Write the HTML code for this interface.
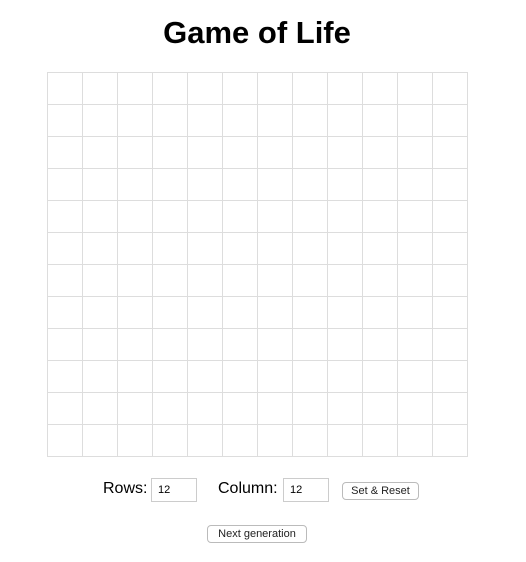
<!DOCTYPE html>
<html><head><style>
body{margin:0;width:526px;height:562px;background:#fff;font-family:"Liberation Sans",sans-serif;position:relative;overflow:hidden}
h1{position:absolute;top:15px;left:0;width:514px;text-align:center;margin:0;font-size:31px;font-weight:bold;color:#000}
.grid{position:absolute;left:47px;top:72px;width:420px;height:384px;
background-image:linear-gradient(to right,#ddd 1px,transparent 1px),linear-gradient(to bottom,#ddd 1px,transparent 1px);
background-size:35px 32px;border-right:1px solid #ddd;border-bottom:1px solid #ddd;box-sizing:content-box}
.t{position:absolute;font-size:16px;color:#000}
.in{position:absolute;border:1px solid #ccc;font-size:11px;line-height:22px;padding-left:6px;box-sizing:border-box;width:46px;height:24px}
.btn{position:absolute;border:1px solid #bbb;border-radius:4px;font-size:11px;text-align:center;color:#222;background:#fff;box-sizing:border-box;line-height:16px}
</style></head><body>
<h1>Game of Life</h1>
<div class="grid"></div>
<div class="t" style="left:103px;top:480px">Rows:</div>
<div class="in" style="left:151px;top:478px">12</div>
<div class="t" style="left:218px;top:480px">Column:</div>
<div class="in" style="left:283px;top:478px">12</div>
<div class="btn" style="left:342px;top:482px;width:77px;height:18px">Set &amp; Reset</div>
<div class="btn" style="left:207px;top:525px;width:100px;height:18px">Next generation</div>
</body></html>
